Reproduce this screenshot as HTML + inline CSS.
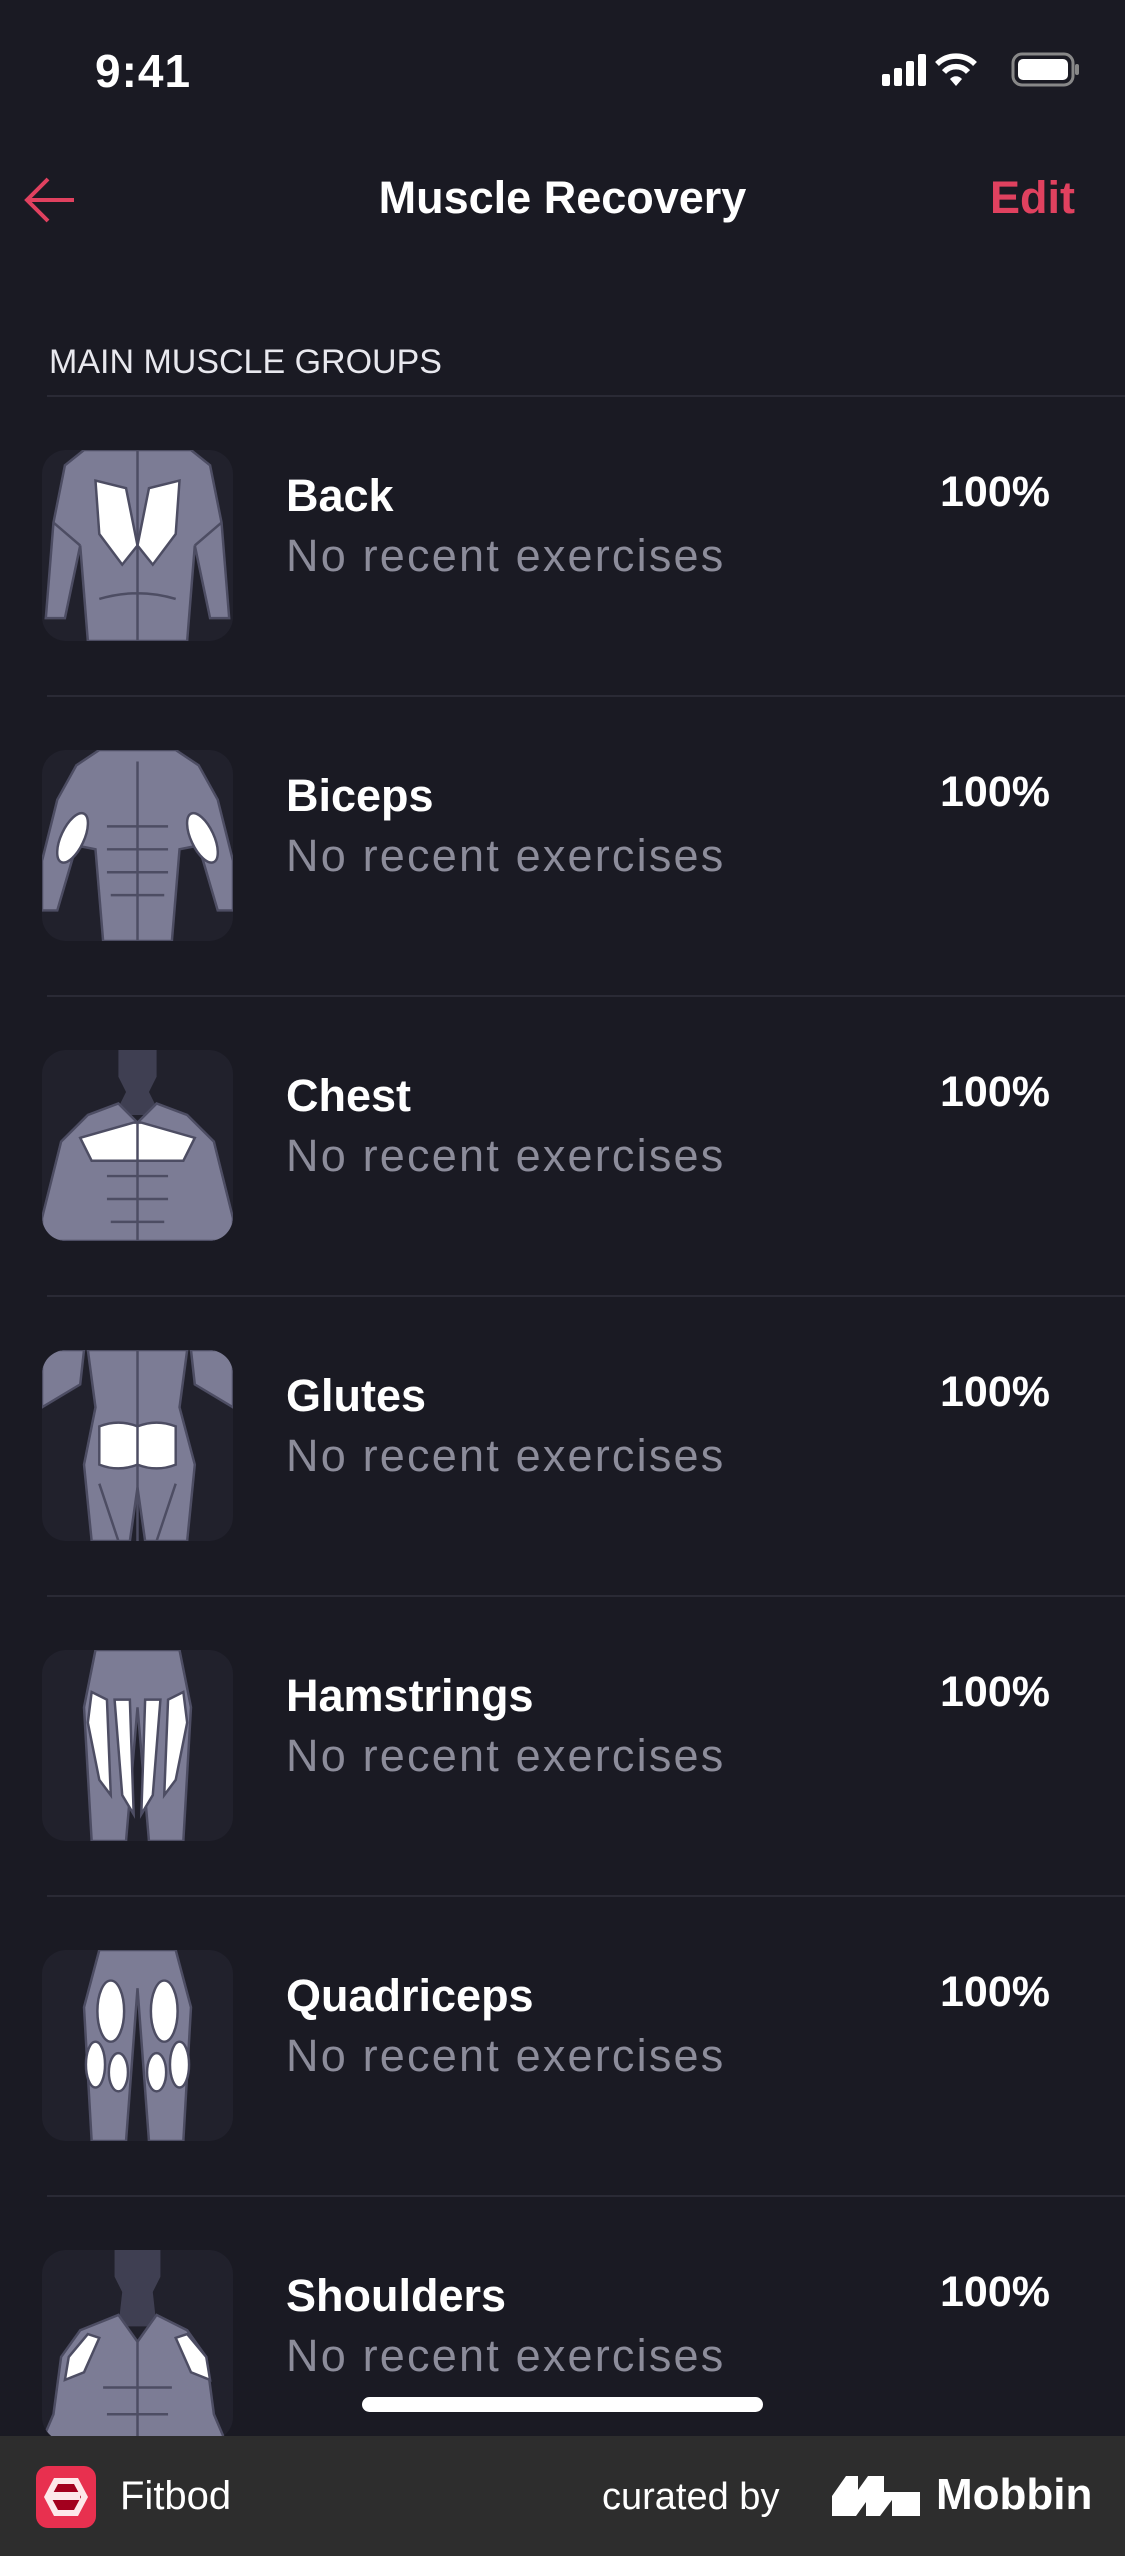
<!DOCTYPE html>
<html><head><meta charset="utf-8"><style>
*{margin:0;padding:0;box-sizing:border-box}
body{width:1125px;height:2556px;background:#1a1a23;font-family:"Liberation Sans",sans-serif;color:#fff;position:relative;overflow:hidden}
.abs{position:absolute}
.time{left:95px;top:44px;font-size:46px;font-weight:bold;letter-spacing:1px}
.title{left:0;width:1125px;text-align:center;top:172px;font-size:45px;font-weight:bold}
.edit{right:50px;top:172px;font-size:45px;font-weight:bold;color:#e0415f}
.sec{left:49px;top:343px;font-size:34px;color:#e8e8ee}
.line{height:2px;background:#2a2a35;left:47px;right:0}
.tile{left:42px;width:191px;height:191px;border-radius:24px;background:#21212c;overflow:hidden}
.tile svg{width:191px;height:191px;display:block}
.rt{left:286px;font-size:45px;font-weight:bold}
.rs{left:286px;font-size:45px;color:#8c8c9a;letter-spacing:2.2px}
.pc{right:75px;font-size:43px;font-weight:bold}
.footer{left:0;top:2436px;width:1125px;height:120px;background:#2d2d2d}
</style></head><body>
<div class="abs time">9:41</div>
<svg class="abs" style="left:880px;top:50px" width="200" height="40" viewBox="0 0 200 40">
<rect x="2" y="24" width="8" height="12" rx="2" fill="#fff"/><rect x="14" y="18" width="8" height="18" rx="2" fill="#fff"/><rect x="26" y="11" width="8" height="25" rx="2" fill="#fff"/><rect x="38" y="4" width="8" height="32" rx="2" fill="#fff"/>
<path d="M57 14a27 27 0 0 1 38 0" stroke="#fff" stroke-width="5.5" fill="none"/><path d="M64 22a16 16 0 0 1 24 0" stroke="#fff" stroke-width="5.5" fill="none"/><path d="M70 29l6 7 6-7a8 8 0 0 0-12 0z" fill="#fff"/>
<rect x="133" y="4" width="60" height="31" rx="9" stroke="#888" stroke-width="3" fill="none"/><rect x="138" y="9" width="50" height="21" rx="5" fill="#fff"/><rect x="195" y="14" width="4" height="11" rx="2" fill="#888"/>
</svg>
<svg class="abs" style="left:22px;top:175px" width="56" height="50" viewBox="0 0 56 50"><path d="M52 25H6M26 4L5 25l21 21" stroke="#e0415f" stroke-width="4" fill="none"/></svg>
<div class="abs title">Muscle Recovery</div>
<div class="abs edit">Edit</div>
<div class="abs sec">MAIN MUSCLE GROUPS</div>
<div class="abs line" style="top:395px"></div>

<div class="abs tile" style="top:450px"><svg viewBox="0 0 100 100"><g stroke="#4d4d63" stroke-width="1.3" fill="#7c7c95"><path d="M22 0h56l10 8 6 30 4 50H88L80 50 76 100H24L20 50 12 88H2L6 38 12 8z"/><path d="M28 16l16 4 6 30-8 10-12-16zM72 16l-16 4-6 30 8 10 12-16z" fill="#fff"/><path d="M50 0v100M6 38l14 12M94 38l-14 12M30 78q20-6 40 0" fill="none"/></g></svg></div>
<div class="abs rt" style="top:470px">Back</div><div class="abs rs" style="top:530px">No recent exercises</div><div class="abs pc" style="top:468px">100%</div>
<div class="abs line" style="top:695px"></div>

<div class="abs tile" style="top:750px"><svg viewBox="0 0 100 100"><g stroke="#4d4d63" stroke-width="1.3" fill="#7c7c95"><path d="M30 0h40l12 8 10 18 8 32v26H92L82 50 72 52 68 100H32L28 52 18 50 8 84H0V58L8 26 18 8z"/><ellipse cx="16" cy="46" rx="6" ry="14" transform="rotate(25 16 46)" fill="#fff"/><ellipse cx="84" cy="46" rx="6" ry="14" transform="rotate(-25 84 46)" fill="#fff"/><path d="M50 6v94M34 40h32M34 52h32M34 64h32M36 76h28" fill="none"/></g></svg></div>
<div class="abs rt" style="top:770px">Biceps</div><div class="abs rs" style="top:830px">No recent exercises</div><div class="abs pc" style="top:768px">100%</div>
<div class="abs line" style="top:995px"></div>

<div class="abs tile" style="top:1050px"><svg viewBox="0 0 100 100"><path d="M40 0h20v14l-4 8 6 12H38l6-12-4-8z" fill="#3f3f52"/><g stroke="#4d4d63" stroke-width="1.3" fill="#7c7c95"><path d="M40 28l10 10 10-10 16 6 14 14 10 40v12H0V88L10 48l14-14z"/><path d="M20 46l28-8h4l28 8-6 12H52 48 26z" fill="#fff"/><path d="M50 38v62M34 66h32M34 78h32M36 90h28" fill="none"/></g></svg></div>
<div class="abs rt" style="top:1070px">Chest</div><div class="abs rs" style="top:1130px">No recent exercises</div><div class="abs pc" style="top:1068px">100%</div>
<div class="abs line" style="top:1295px"></div>

<div class="abs tile" style="top:1350px"><svg viewBox="0 0 100 100"><g stroke="#4d4d63" stroke-width="1.3" fill="#7c7c95"><path d="M0 0h22l-2 18 L0 30zM100 0H78l2 18 20 12z"/><path d="M24 0h52l-4 30 8 30-4 40H54L50 72 46 100H26L22 60l6-30z"/><path d="M30 40q10-4 20 0 10-4 20 0v20q-10 4-20 0-10 4-20 0z" fill="#fff"/><path d="M50 0v100M30 70l10 30M70 70l-10 30" fill="none"/></g></svg></div>
<div class="abs rt" style="top:1370px">Glutes</div><div class="abs rs" style="top:1430px">No recent exercises</div><div class="abs pc" style="top:1368px">100%</div>
<div class="abs line" style="top:1595px"></div>

<div class="abs tile" style="top:1650px"><svg viewBox="0 0 100 100"><g stroke="#4d4d63" stroke-width="1.3" fill="#7c7c95"><path d="M28 0h44l6 30-4 70H56L50 30 44 100H26L22 30z"/><path d="M26 22l8 4 2 50-6-8-6-30zM38 26l8 0 2 60-6-10zM74 22l-8 4-2 50 6-8 6-30zM62 26l-8 0-2 60 6-10z" fill="#fff"/></g></svg></div>
<div class="abs rt" style="top:1670px">Hamstrings</div><div class="abs rs" style="top:1730px">No recent exercises</div><div class="abs pc" style="top:1668px">100%</div>
<div class="abs line" style="top:1895px"></div>

<div class="abs tile" style="top:1950px"><svg viewBox="0 0 100 100"><g stroke="#4d4d63" stroke-width="1.3" fill="#7c7c95"><path d="M30 0h40l8 30-4 70H56L50 20 44 100H26L22 30z"/><ellipse cx="36" cy="32" rx="7" ry="16" fill="#fff"/><ellipse cx="64" cy="32" rx="7" ry="16" fill="#fff"/><ellipse cx="28" cy="60" rx="5" ry="12" fill="#fff"/><ellipse cx="72" cy="60" rx="5" ry="12" fill="#fff"/><ellipse cx="40" cy="64" rx="5" ry="10" fill="#fff"/><ellipse cx="60" cy="64" rx="5" ry="10" fill="#fff"/></g></svg></div>
<div class="abs rt" style="top:1970px">Quadriceps</div><div class="abs rs" style="top:2030px">No recent exercises</div><div class="abs pc" style="top:1968px">100%</div>
<div class="abs line" style="top:2195px"></div>

<div class="abs tile" style="top:2250px"><svg viewBox="0 0 100 100"><path d="M38 0h24v14l-4 8 2 18H40l2-18-4-8z" fill="#3f3f52"/><g stroke="#4d4d63" stroke-width="1.3" fill="#7c7c95"><path d="M40 34l10 14 10-14 16 8 10 14 4 30 6 14H0l6-14 4-30 10-14z"/><path d="M24 44l-10 12-2 12 10-4 8-18zM76 44l10 12 2 12-10-4-8-18z" fill="#fff"/><path d="M50 48v52M32 72h36M34 86h32" fill="none"/></g></svg></div>
<div class="abs rt" style="top:2270px">Shoulders</div><div class="abs rs" style="top:2330px">No recent exercises</div><div class="abs pc" style="top:2268px">100%</div>

<div class="abs" style="left:362px;top:2397px;width:401px;height:15px;border-radius:8px;background:#fff"></div>

<div class="abs footer">
<svg class="abs" style="left:36px;top:30px" width="60" height="62" viewBox="0 0 60 62"><rect width="60" height="62" rx="12" fill="#e8304f"/><path d="M18 12h24l10 19-10 19H18L8 31z" fill="#fde8ea"/><path d="M22 18h16l7 13-7 13H22l-7-13z" fill="#a3001e"/><path d="M16 26h28v8H12z" fill="#fde8ea"/></svg>
<div class="abs" style="left:120px;top:38px;font-size:40px">Fitbod</div>
<div class="abs" style="left:602px;top:40px;font-size:38px">curated by</div>
<svg class="abs" style="left:832px;top:40px" width="88" height="40" viewBox="0 0 88 40"><path d="M0 40V20L14 0h12v14L36 0h16v16h36v24H60V24L48 40H34V26L24 40z" fill="#fff"/></svg>
<div class="abs" style="left:936px;top:34px;font-size:44px;font-weight:bold">Mobbin</div>
</div>
</body></html>
